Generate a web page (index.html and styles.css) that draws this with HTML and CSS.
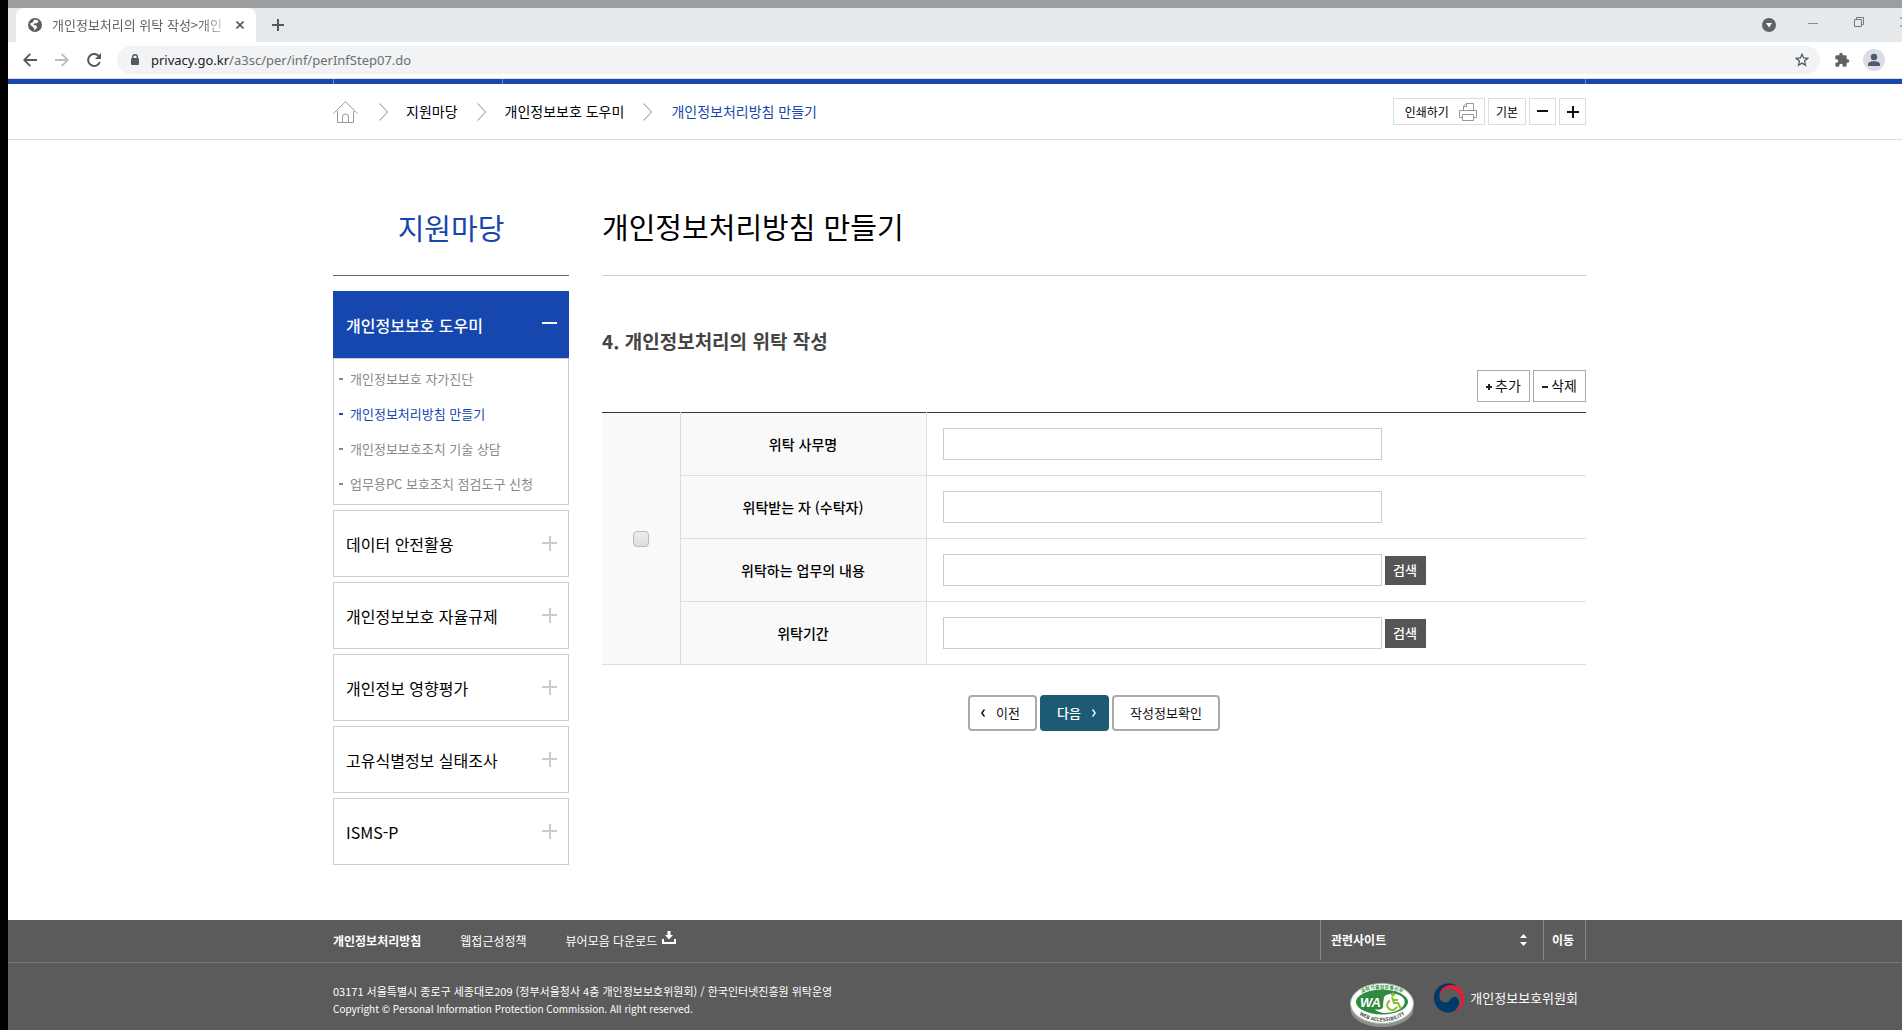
FILE: index.html
```html
<!DOCTYPE html>
<html lang="ko">
<head>
<meta charset="utf-8">
<title>개인정보처리의 위탁 작성&gt;개인정보보호 포털</title>
<link rel="stylesheet" href="styles.css">
</head>
<body>
<div class="window">
  <div class="tabstrip">
    <div class="tab">
      <svg class="tab-globe" width="14" height="14" viewBox="0 0 14 14" aria-hidden="true"><circle cx="7" cy="7" r="7" fill="#5a5e61"/><path d="M6.500 1.500 10.500 2.500 9.500 5 6 5.500 5.500 7 8.500 7.500 9 9.500 6.500 12.500 6 10 3 7.500 2 5.500 4.500 4.500Z" fill="#fff"/></svg>
      <span class="tab-title">개인정보처리의 위탁 작성&gt;개인</span>
      <button class="icon-btn" aria-label="탭 닫기"><svg width="8" height="8" viewBox="0 0 8 8"><path d="M0.500 0.500 7.500 7.500M7.500 0.500 0.500 7.500" stroke="#55595c" stroke-width="1.600"/></svg></button>
    </div>
    <button class="icon-btn new-tab" aria-label="새 탭"><svg width="12" height="12" viewBox="0 0 12 12"><path d="M6 0V12M0 6H12" stroke="#55595c" stroke-width="2"/></svg></button>
    <div class="window-controls">
      <button class="icon-btn" aria-label="탭 검색"><svg width="14" height="14" viewBox="0 0 14 14"><circle cx="7" cy="7" r="7" fill="#5f6368"/><path d="M4 5H10L7 9.500Z" fill="#fff"/></svg></button>
      <button class="icon-btn minimize" aria-label="최소화"><svg width="10" height="10" viewBox="0 0 10 10"><path d="M0 5.500H10" stroke="#8a8d90"/></svg></button>
      <button class="icon-btn" aria-label="이전 크기로"><svg width="10" height="10" viewBox="0 0 10 10" fill="none" stroke="#777a7d"><path d="M0.500 2.500H7.500V9.500H0.500ZM2.500 2.500V0.500H9.500V7.500H7.500"/></svg></button>
      <button class="icon-btn close" aria-label="닫기"><svg width="2" height="10" viewBox="0 0 2 10"><path d="M0 0 2 2M0 10 2 8" stroke="#777a7d"/></svg></button>
    </div>
  </div>
  <div class="toolbar">
    <button class="icon-btn" aria-label="뒤로"><svg width="14" height="14" viewBox="0 0 14 14" fill="none" stroke="#55595c" stroke-width="1.800"><path d="M14 7H1.500M7.300 0.800 1.200 7 7.300 13.200"/></svg></button>
    <button class="icon-btn" aria-label="앞으로"><svg width="14" height="14" viewBox="0 0 14 14" fill="none" stroke="#bbbdbf" stroke-width="1.800"><path d="M0 7H12.500M6.700 0.800 12.800 7 6.700 13.200"/></svg></button>
    <button class="icon-btn" aria-label="새로고침"><svg width="15" height="14" viewBox="0 0 15 14"><path d="M12.800 9A6 6 0 1 1 11.500 2.800" fill="none" stroke="#55595c" stroke-width="2"/><path d="M14 0V6H8Z" fill="#55595c"/></svg></button>
    <div class="omnibox">
      <svg width="8" height="12" viewBox="0 0 8 12" aria-hidden="true"><rect y="4" width="8" height="7" rx="1" fill="#55595c"/><path d="M1.700 5V3A2.300 2.200 0 0 1 6.300 3V5" fill="none" stroke="#55595c" stroke-width="1.400"/></svg>
      <span class="url"><span class="host">privacy.go.kr</span>/a3sc/per/inf/perInfStep07.do</span>
      <button class="icon-btn" aria-label="북마크"><svg width="14" height="14" viewBox="0 0 14 14"><path d="M7 1.300 8.600 5 12.700 5.400 9.600 8.100 10.500 12.200 7 10.100 3.500 12.200 4.400 8.100 1.300 5.400 5.400 5Z" fill="none" stroke="#55595c" stroke-width="1.300"/></svg></button>
    </div>
    <button class="icon-btn" aria-label="확장 프로그램"><svg width="16" height="16" viewBox="0 0 24 24"><path d="M20.500 11H19V7a2 2 0 0 0-2-2h-4V3.500a2.500 2.500 0 0 0-5 0V5H4a2 2 0 0 0-2 2v3.800h1.500a2.700 2.700 0 0 1 0 5.400H2V20a2 2 0 0 0 2 2h3.800v-1.500a2.700 2.700 0 0 1 5.400 0V22H17a2 2 0 0 0 2-2v-4h1.500a2.500 2.500 0 0 0 0-5z" fill="#5f6368"/></svg></button>
    <button class="icon-btn profile" aria-label="프로필"><svg width="22" height="22" viewBox="0 0 22 22"><circle cx="11" cy="11" r="11" fill="#dadde3"/><circle cx="11" cy="8" r="3.200" fill="#4f5b70"/><path d="M5 17V15.500C5 13 8.500 12.300 11 12.300S17 13 17 15.500V17Z" fill="#4f5b70"/></svg></button>
  </div>

  <div class="gnb"><div class="container gnb-inner"><span class="gnb-cell"></span></div></div>

  <div class="location">
    <div class="container location-inner">
      <nav class="breadcrumb" aria-label="현재 위치">
        <a href="#" class="home" aria-label="홈"><svg width="25" height="22" viewBox="0 0 25 22" fill="none" stroke="#999"><path d="M0.500 12.500 12.500 0.700 24.500 12.500M4.500 10V21.500H20.500V10M9.500 21.500V16a3 3 0 0 1 6 0V21.500"/></svg></a>
        <svg class="sep" width="9" height="18" viewBox="0 0 9 18" fill="none" stroke="#888"><path d="M0.500 0.500 8.500 9 0.500 17.500"/></svg>
        <a href="#">지원마당</a>
        <svg class="sep" width="9" height="18" viewBox="0 0 9 18" fill="none" stroke="#888"><path d="M0.500 0.500 8.500 9 0.500 17.500"/></svg>
        <a href="#">개인정보보호 도우미</a>
        <svg class="sep" width="9" height="18" viewBox="0 0 9 18" fill="none" stroke="#888"><path d="M0.500 0.500 8.500 9 0.500 17.500"/></svg>
        <a href="#" class="current">개인정보처리방침 만들기</a>
      </nav>
      <div class="page-tools">
        <button class="tool print">인쇄하기 <svg width="18" height="18" viewBox="0 0 18 18" fill="none" stroke="#999"><path d="M4.500 7.500V3L7 0.500H14.500V7.500M4.500 3.500H7.500V0.500M3.500 14.500H0.500V7.500H17.500V14.500H14.500M3.500 11.500H14.500V17.500H3.500Z"/></svg></button>
        <button class="tool">기본</button>
        <button class="tool square" aria-label="축소"><svg width="11" height="12" viewBox="0 0 11 12"><path d="M0 5H11" stroke="#111" stroke-width="2"/></svg></button>
        <button class="tool square" aria-label="확대"><svg width="12" height="12" viewBox="0 0 12 12"><path d="M0 6H12M6 0V12" stroke="#111" stroke-width="2"/></svg></button>
      </div>
    </div>
  </div>

  <div class="body-area">
    <div class="container columns">
      <aside class="sidebar">
        <h2 class="side-title">지원마당</h2>
        <ul class="menu">
          <li>
            <a href="#" class="menu-link open">개인정보보호 도우미<svg width="15" height="15" viewBox="0 0 15 15"><path d="M0 6H15" stroke="#fff" stroke-width="2"/></svg></a>
            <ul class="submenu">
              <li><a href="#">개인정보보호 자가진단</a></li>
              <li><a href="#" class="current">개인정보처리방침 만들기</a></li>
              <li><a href="#">개인정보보호조치 기술 상담</a></li>
              <li><a href="#">업무용PC 보호조치 점검도구 신청</a></li>
            </ul>
          </li>
          <li><a href="#" class="menu-link">데이터 안전활용<svg width="15" height="15" viewBox="0 0 15 15"><path d="M0 7H15M8 0V15" stroke="#ccc" stroke-width="2"/></svg></a></li>
          <li><a href="#" class="menu-link">개인정보보호 자율규제<svg width="15" height="15" viewBox="0 0 15 15"><path d="M0 7H15M8 0V15" stroke="#ccc" stroke-width="2"/></svg></a></li>
          <li><a href="#" class="menu-link">개인정보 영향평가<svg width="15" height="15" viewBox="0 0 15 15"><path d="M0 7H15M8 0V15" stroke="#ccc" stroke-width="2"/></svg></a></li>
          <li><a href="#" class="menu-link">고유식별정보 실태조사<svg width="15" height="15" viewBox="0 0 15 15"><path d="M0 7H15M8 0V15" stroke="#ccc" stroke-width="2"/></svg></a></li>
          <li><a href="#" class="menu-link">ISMS-P<svg width="15" height="15" viewBox="0 0 15 15"><path d="M0 7H15M8 0V15" stroke="#ccc" stroke-width="2"/></svg></a></li>
        </ul>
      </aside>
      <main class="content">
        <h1 class="page-title">개인정보처리방침 만들기</h1>
        <h2 class="section-title">4. 개인정보처리의 위탁 작성</h2>
        <div class="row-actions">
          <button class="row-btn"><svg width="6" height="6" viewBox="0 0 6 6"><path d="M0 3H6M3 0V6" stroke="#222" stroke-width="2"/></svg>추가</button>
          <button class="row-btn"><svg width="6" height="6" viewBox="0 0 6 6"><path d="M0 3H6" stroke="#222" stroke-width="2"/></svg>삭제</button>
        </div>
        <table class="form-table">
          <colgroup><col class="col-check"><col class="col-label"><col></colgroup>
          <tbody>
            <tr>
              <td class="check-cell" rowspan="4"><input type="checkbox" class="check" aria-label="위탁 항목 선택"></td>
              <th scope="row"><label for="f1">위탁 사무명</label></th>
              <td><div class="field"><input type="text" id="f1" class="text"></div></td>
            </tr>
            <tr>
              <th scope="row"><label for="f2">위탁받는 자 (수탁자)</label></th>
              <td><div class="field"><input type="text" id="f2" class="text"></div></td>
            </tr>
            <tr>
              <th scope="row"><label for="f3">위탁하는 업무의 내용</label></th>
              <td><div class="field"><input type="text" id="f3" class="text"><button class="search">검색</button></div></td>
            </tr>
            <tr>
              <th scope="row"><label for="f4">위탁기간</label></th>
              <td><div class="field"><input type="text" id="f4" class="text"><button class="search">검색</button></div></td>
            </tr>
          </tbody>
        </table>
        <div class="step-actions">
          <button class="step prev"><svg width="4" height="8" viewBox="0 0 4 8"><path d="M3.500 0.500 0.800 4 3.500 7.500" fill="none" stroke="#000" stroke-width="1.400"/></svg>이전</button>
          <button class="step next">다음<svg width="4" height="8" viewBox="0 0 4 8"><path d="M0.500 0.500 3.200 4 0.500 7.500" fill="none" stroke="#fff" stroke-width="1.400"/></svg></button>
          <button class="step wide">작성정보확인</button>
        </div>
      </main>
    </div>
  </div>

  <footer class="footer">
    <div class="footer-top">
      <div class="container footer-bar">
        <nav class="footer-links">
          <a href="#"><strong>개인정보처리방침</strong></a>
          <a href="#">웹접근성정책</a>
          <a href="#" class="viewer">뷰어모음 다운로드<svg width="14" height="13" viewBox="0 0 14 13"><path d="M5.500 0H8.500V4H11L7 8.500 3 4H5.500ZM0 8H2V11H12V8H14V13H0Z" fill="#fff"/></svg></a>
        </nav>
        <div class="related">
          <button class="related-list">관련사이트<svg width="7" height="12" viewBox="0 0 7 12"><path d="M3.500 0 7 4H0ZM3.500 12 7 8H0Z" fill="#fff"/></svg></button>
          <button class="related-go">이동</button>
        </div>
      </div>
    </div>
    <div class="footer-bottom">
      <div class="container footer-info">
        <address class="address">03171 서울특별시 종로구 세종대로209 (정부서울청사 4층 개인정보보호위원회) / 한국인터넷진흥원 위탁운영<br><span class="copyright">Copyright © Personal Information Protection Commission. All right reserved.</span></address>
        <div class="marks">
          <svg class="wa" width="64" height="46" viewBox="0 0 64 46" role="img" aria-label="WEB ACCESSIBILITY">
            <defs><path id="arc-top" d="M5 21A27 15.500 0 0 1 59 21"/><path id="arc-bottom" d="M2 18A30 20.500 0 0 0 62 18"/></defs>
            <ellipse cx="32" cy="26" rx="31.500" ry="18" fill="#8f8f8f"/>
            <ellipse cx="32" cy="20.500" rx="31.500" ry="20" fill="#fff" stroke="#9cc09a"/>
            <ellipse cx="32" cy="19" rx="26" ry="12.500" fill="#2f8a40"/>
            <path d="M34 14C38 9 50 10 54 16C57 23 49 29 36 30C31 30 26 28 25 26C31 28 34 25 33 21Z" fill="#fff"/>
            <circle cx="43" cy="11.500" r="2" fill="#84bf2c"/>
            <path d="M42 14 44 20H48L51 26M43 17H48M40 17.500A5 5 0 1 0 47 23.500" fill="none" stroke="#84bf2c" stroke-width="2"/>
            <text x="10" y="24" class="wa-text">WA</text>
            <text class="wa-small" fill="#2f8a40"><textPath href="#arc-top" startOffset="50%">과학기술정보통신부</textPath></text>
            <text class="wa-small" fill="#444"><textPath href="#arc-bottom" startOffset="50%">WEB ACCESSIBILITY</textPath></text>
          </svg>
          <div class="pipc">
            <svg width="30" height="30" viewBox="0 0 30 30" aria-hidden="true"><path d="M23.500 3.500C20 0.500 15 -0.500 10 1C3 3.500 -0.500 9.500 0 16C0.500 23.500 6.500 29.500 13.500 29.500C20.500 29.500 25 24.500 25 19.500C25 16 23 14 20.500 14C15.500 14 16.500 19.500 11.500 19.500C7.500 19.500 5 16.500 5.500 12C6.500 5.500 14 0.500 23.500 3.500Z" fill="#003a68"/><path d="M5.500 12C6.500 5 12 1.500 18 2C25.500 2.700 30 9 30 15.500C30 22 26.500 27 20.500 29.500C25 26 27.500 21 27 16C26.300 10 21.500 5.500 15 5.500C11 5.500 7.500 8 5.500 12Z" fill="#ed1c34"/></svg>
            <span>개인정보보호위원회</span>
          </div>
        </div>
      </div>
    </div>
  </footer>
</div>
</body>
</html>
```
FILE: styles.css
```css
* { box-sizing: border-box; }

body {
  margin: 0;
  background: #fff;
  color: #111;
  font-family: "Noto Sans CJK KR", "Noto Sans", sans-serif;
  font-size: 14px;
  line-height: 20px;
}

h1, h2, ul { margin: 0; padding: 0; }
ul { list-style: none; }
a { color: inherit; text-decoration: none; }
button { font: inherit; color: inherit; cursor: pointer; }
svg { display: block; flex: none; }

.window {
  min-height: 100vh;
  display: flex;
  flex-direction: column;
  border-left: 8px solid #000;
}

.container {
  width: 100%;
  max-width: 1253px;
  margin: 0 auto;
}

/* browser chrome */
.icon-btn {
  display: flex;
  padding: 0;
  border: 0;
  background: none;
}

.tabstrip {
  display: flex;
  align-items: center;
  height: 42px;
  padding-left: 8px;
  border-top: 8px solid #9c9d9f;
  background: #e5e9eb;
}

.tab {
  display: flex;
  align-items: center;
  width: 240px;
  height: 34px;
  padding: 0 12px;
  border-radius: 8px 8px 0 0;
  background: #fff;
}

.tab-title {
  flex: 1;
  margin: 0 12px 0 10px;
  white-space: nowrap;
  color: #5f6368;
  font-size: 13px;
  line-height: 18px;
  -webkit-mask-image: linear-gradient(to right, #000 150px, transparent 180px);
  mask-image: linear-gradient(to right, #000 150px, transparent 180px);
}

.new-tab { margin-left: 16px; }

.window-controls {
  display: flex;
  align-items: center;
  margin-left: auto;
}
.minimize { margin: 0 36px 4px 32px; }
.window-controls .minimize + .icon-btn { margin-bottom: 6px; }
.close { margin: 0 0 6px 36px; }

.toolbar {
  display: flex;
  align-items: center;
  height: 37px;
  padding: 0 17px 0 15px;
  gap: 18px;
  border-bottom: 1px solid #dadcde;
}

.omnibox {
  flex: 1;
  display: flex;
  align-items: center;
  height: 28px;
  margin-right: -4px;
  margin-left: -3px;
  padding: 0 11px 0 14px;
  border-radius: 14px;
  background: #f1f3f4;
}
.url {
  flex: 1;
  margin-left: 12px;
  color: #6b6f73;
  font-family: "Noto Sans", sans-serif;
  font-size: 13px;
}
.host { color: #202124; }
.profile { margin-left: -5px; }

/* site header */
.gnb {
  padding-left: 9px;
  background: #1647ae;
}
.gnb-inner {
  height: 5px;
  border: solid #6f8fd0;
  border-width: 0 1px;
}
.gnb-cell {
  display: block;
  width: 169px;
  height: 5px;
  border-right: 1px solid #6f8fd0;
}

.location {
  padding-left: 9px;
  border-bottom: 1px solid #ddd;
}
.location-inner {
  display: flex;
  align-items: center;
  justify-content: space-between;
  height: 55px;
}
.breadcrumb {
  display: flex;
  align-items: center;
  color: #000;
}
.breadcrumb a { padding-bottom: 2px; }
.breadcrumb .home { padding-bottom: 0; }
.breadcrumb .sep { margin: 0 19px; }
.breadcrumb .home + .sep { margin: 0 18px 0 21px; }
.breadcrumb .current { color: #1647ae; }

.page-tools {
  display: flex;
  gap: 3px;
}
.tool {
  display: flex;
  align-items: center;
  justify-content: center;
  height: 27px;
  padding: 0 7px;
  border: 1px solid #ddd;
  background: #fff;
  color: #000;
  font-size: 12px;
}
.print { gap: 10px; padding: 0 7px 0 11px; }
.square { width: 27px; padding: 0; }

/* page body */
.body-area {
  flex: 1;
  padding: 52px 0 55px 9px;
}
.columns {
  display: grid;
  grid-template-columns: 236px minmax(0, 1fr);
  gap: 33px;
}

.side-title, .page-title {
  height: 84px;
  padding-top: 13px;
  font-size: 29px;
  font-weight: 400;
  line-height: 42px;
}
.side-title {
  padding-top: 14px;
  border-bottom: 1px solid #666;
  color: #1647ae;
  text-align: center;
}
.page-title {
  border-bottom: 1px solid #ccc;
  color: #000;
}

.menu {
  display: grid;
  gap: 5px;
  margin-top: 15px;
}
.menu-link {
  display: flex;
  align-items: center;
  justify-content: space-between;
  height: 67px;
  padding: 0 11px 0 12px;
  border: 1px solid #ccc;
  color: #000;
  font-size: 16px;
}
.menu-link.open {
  border-color: #1647ae;
  background: #1647ae;
  color: #fff;
  font-weight: 500;
}
.submenu {
  padding: 2px 0 3px;
  border: 1px solid #ccc;
  color: #888;
  font-size: 13px;
  line-height: 35px;
}
.submenu a {
  display: flex;
  align-items: center;
  gap: 7px;
  padding-left: 5px;
}
.submenu a::before {
  content: "";
  width: 4px;
  height: 2px;
  background: currentColor;
}
.submenu .current { color: #1647ae; }

.section-title {
  margin-top: 49px;
  color: #444;
  font-size: 19px;
  font-weight: 700;
  line-height: 32px;
}

.row-actions {
  display: flex;
  justify-content: flex-end;
  gap: 3px;
  margin-top: 13px;
}
.row-btn {
  display: flex;
  align-items: center;
  justify-content: center;
  gap: 3px;
  width: 53px;
  height: 32px;
  padding: 0 0 2px;
  border: 1px solid #aaa;
  background: #fff;
}
.row-btn svg { margin-top: 4px; }

.form-table {
  width: 100%;
  margin-top: 10px;
  border-collapse: collapse;
  border-top: 1px solid #2f374a;
  table-layout: fixed;
}
.col-check { width: 78px; }
.col-label { width: 246px; }
.form-table th, .form-table td {
  height: 63px;
  padding: 0;
  border-bottom: 1px solid #ddd;
}
.form-table th, .form-table .check-cell {
  border-right: 1px solid #ddd;
  background: #f9f9f9;
  text-align: center;
}
.form-table th {
  color: #000;
  font-weight: 500;
}
.check {
  appearance: none;
  display: block;
  width: 16px;
  height: 16px;
  margin: 0 auto;
  border: 1px solid #bbb;
  border-radius: 4px;
  background: linear-gradient(#eee, #ddd);
}
.field {
  display: flex;
  align-items: center;
  gap: 3px;
  padding-left: 16px;
}
.text {
  width: 439px;
  height: 32px;
  padding: 0 8px;
  border: 1px solid #ccc;
  background: #fff;
  font: inherit;
}
.search {
  width: 41px;
  height: 29px;
  padding: 0;
  border: 0;
  background: #555;
  color: #fff;
  font-size: 13px;
  font-weight: 500;
}

.step-actions {
  display: flex;
  justify-content: center;
  gap: 3px;
  margin-top: 30px;
}
.step {
  display: flex;
  align-items: center;
  justify-content: center;
  gap: 11px;
  width: 69px;
  height: 36px;
  padding: 0;
  border: 2px solid #aaa;
  border-radius: 4px;
  background: #fff;
  font-size: 13px;
}
.prev { padding-right: 4px; }
.next {
  padding-left: 4px;
  border-color: #1d5a73;
  background: #1d5a73;
  color: #fff;
  font-weight: 500;
}
.wide { width: 108px; }

/* footer */
.footer {
  background: #5b5b5b;
  color: #fff;
  font-size: 12px;
}
.footer-top {
  padding-left: 9px;
  border-bottom: 1px solid #777;
}
.footer-bar {
  display: flex;
  justify-content: space-between;
  height: 42px;
}
.footer-links {
  display: flex;
  align-items: center;
  gap: 39px;
}
.viewer {
  display: flex;
  gap: 5px;
}
.related {
  display: flex;
  height: 40px;
  border: solid #888;
  border-width: 0 1px;
  font-weight: 700;
}
.related button {
  display: flex;
  align-items: center;
  border: 0;
  background: none;
}
.related-list {
  justify-content: space-between;
  width: 222px;
  padding: 0 16px 0 10px;
}
.related .related-go {
  width: 42px;
  padding: 0 8px;
  border-left: 1px solid #888;
}

.footer-bottom { padding-left: 9px; }
.footer-info {
  display: flex;
  justify-content: space-between;
  height: 67px;
  padding-top: 20px;
}
.address {
  font-size: 11px;
  font-style: normal;
  line-height: 17px;
}
.copyright { font-size: 10px; }
.marks {
  display: flex;
  gap: 20px;
  padding-right: 8px;
}
.pipc {
  display: flex;
  gap: 6px;
  font-size: 13px;
  line-height: 30px;
}
.wa-text {
  fill: #fff;
  font: italic 700 13px "Liberation Sans", sans-serif;
}
.wa-small {
  font: 700 5px "Noto Sans CJK KR", sans-serif;
  text-anchor: middle;
}
```
